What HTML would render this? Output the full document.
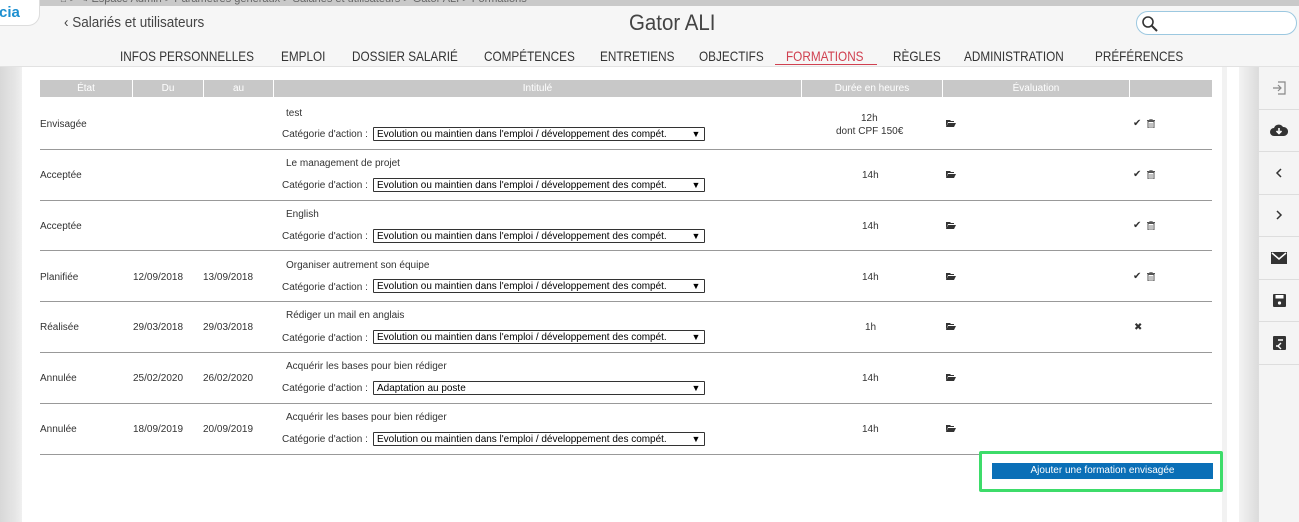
<!DOCTYPE html>
<html><head><meta charset="utf-8"><style>
*{box-sizing:border-box;margin:0;padding:0}
body{width:1299px;height:522px;overflow:hidden;background:#f6f6f6;font-family:"Liberation Sans",sans-serif;position:relative;color:#333}
.crumb{position:absolute;left:0;top:0;width:1299px;height:6px;background:#c9c9c9;font-size:11px;color:#666;overflow:hidden}
.crumb span{position:absolute;left:60px;top:-8px}
.logo{position:absolute;left:-10px;top:-6px;width:50px;height:32px;background:#fff;border-radius:0 0 12px 0;border:1px solid #ddd;font-size:15px;font-weight:bold;color:#1c8fd0;padding:9px 0 0 8px}
.back{position:absolute;left:64px;top:14px;font-size:15px;color:#444;transform:scaleX(.9);transform-origin:left}
.title{position:absolute;left:629px;top:10px;font-size:22px;color:#444;transform:scaleX(.93);transform-origin:left}
.search{position:absolute;left:1136px;top:11px;width:161px;height:24px;border:1px solid #9cc8e0;border-radius:12px;background:#fff}
.nav{position:absolute;top:48px;font-size:14px;color:#333;white-space:nowrap}
.nav span{position:absolute;transform:scaleX(.84);transform-origin:left}
.navline{position:absolute;left:0;top:66px;width:1299px;height:1px;background:#e2e2e2}
.lstrip{position:absolute;left:0;top:67px;width:22px;height:455px;background:linear-gradient(90deg,#d8d8d8,#e6e6e6 70%,#f0f0f0)}
.panel{position:absolute;left:22px;top:67px;width:1200px;height:455px;background:#fff}
.p2{position:absolute;left:1222px;top:67px;width:5px;height:455px;background:#f2f2f2}
.p3{position:absolute;left:1227px;top:67px;width:12px;height:455px;background:#fff}
.p4{position:absolute;left:1239px;top:67px;width:19px;height:455px;background:linear-gradient(90deg,#f3f3f3,#dcdcdc)}
.side{position:absolute;left:1258px;top:67px;width:41px;height:455px;background:#f4f4f4;border-left:1px solid #ddd}
.side div{height:42.5px;border-bottom:1px solid #ddd;display:flex;align-items:center;justify-content:center}
.th{position:absolute;top:80px;height:17px;background:#c8c8c8;color:#fff;font-size:10px;text-align:center;line-height:17px}
.cell{position:absolute;font-size:10px;color:#333}
.sep{position:absolute;left:40px;width:1172px;height:1px;background:#999}
.sel{position:absolute;left:373px;width:332px;height:14px;border:1px solid #333;font-size:10.5px;color:#000;background:#fff;padding-left:3px;line-height:12px;border-radius:1px;white-space:nowrap;overflow:hidden}
.sel span{display:inline-block;transform:scaleX(.95);transform-origin:left}
.sel i{position:absolute;right:0;top:0;width:16px;height:12px;background:#fff;font-style:normal;font-size:9px;text-align:center}
.fold{position:absolute;width:10px;height:7px}
.btnbox{position:absolute;left:979px;top:451px;width:244px;height:41px;border:3px solid #3ddc6a;border-radius:2px;background:#fff}
.btn{position:absolute;left:992px;top:463px;width:221px;height:16px;background:#0a6fb7;color:#fff;font-size:10px;text-align:center;line-height:16px}
</style></head><body>
<div class="crumb"><span>⌂ &gt; ✎ Espace Admin &gt; Paramètres généraux &gt; Salariés et utilisateurs &gt; Gator ALI &gt; Formations</span></div>
<div class="logo">cia</div>
<div class="back">‹ Salariés et utilisateurs</div>
<div class="title">Gator ALI</div>
<div class="search"><svg width="18" height="18" style="position:absolute;left:4px;top:3px" viewBox="0 0 18 18"><circle cx="7" cy="7" r="5" fill="none" stroke="#333" stroke-width="1.6"/><path d="M11 11l5 5" stroke="#333" stroke-width="2"/></svg></div>
<div class="nav">
<span style="left:120px">INFOS PERSONNELLES</span><span style="left:281px">EMPLOI</span><span style="left:352px">DOSSIER SALARIÉ</span><span style="left:484px">COMPÉTENCES</span><span style="left:600px">ENTRETIENS</span><span style="left:699px">OBJECTIFS</span><span style="left:786px;color:#d04050">FORMATIONS</span><span style="left:893px">RÈGLES</span><span style="left:964px">ADMINISTRATION</span><span style="left:1095px">PRÉFÉRENCES</span>
</div>
<div style="position:absolute;left:775px;top:64px;width:102px;height:1px;background:#d04050"></div>
<div class="navline"></div>
<div class="lstrip"></div><div class="panel"></div><div class="p2"></div><div class="p3"></div><div class="p4"></div>
<div class="side">
<div><svg width="14" height="14" viewBox="0 0 14 14" fill="none" stroke="#888" stroke-width="1.2"><path d="M6 1h7v12H6M1 7h8M6 4l3 3-3 3"/></svg></div>
<div><svg width="18" height="13" viewBox="0 0 18 13"><path d="M4 12a4 4 0 010-8 5 5 0 019-1 4 4 0 011 9z" fill="#333"/><path d="M9 4v5M6.5 7l2.5 2.5L11.5 7" stroke="#fff" stroke-width="1.6" fill="none"/></svg></div>
<div><svg width="8" height="10" viewBox="0 0 8 10"><path d="M6 1L2 5l4 4" stroke="#333" stroke-width="1.5" fill="none"/></svg></div>
<div><svg width="8" height="10" viewBox="0 0 8 10"><path d="M2 1l4 4-4 4" stroke="#333" stroke-width="1.5" fill="none"/></svg></div>
<div><svg width="16" height="12" viewBox="0 0 16 12"><rect width="16" height="12" fill="#333"/><path d="M1 1l7 6 7-6" stroke="#fff" stroke-width="1.5" fill="none"/></svg></div>
<div><svg width="13" height="13" viewBox="0 0 13 13"><rect width="13" height="13" rx="1" fill="#333"/><rect x="2.5" y="1" width="8" height="3.5" fill="#fff"/><circle cx="6.5" cy="9" r="1.6" fill="#fff"/></svg></div>
<div><svg width="13" height="14" viewBox="0 0 13 14"><rect width="13" height="14" rx="1" fill="#333"/><path d="M10 4H5M3 10h3M8 7l-3 3 3 3" stroke="#fff" stroke-width="1.4" fill="none"/></svg></div>
</div>
<div class="th" style="left:40px;width:92px">État</div>
<div class="th" style="left:133px;width:70px">Du</div>
<div class="th" style="left:204px;width:69px">au</div>
<div class="th" style="left:274px;width:527px">Intitulé</div>
<div class="th" style="left:802px;width:140px">Durée en heures</div>
<div class="th" style="left:943px;width:186px">Évaluation</div>
<div class="th" style="left:1130px;width:82px"></div>

<svg width="0" height="0" style="position:absolute"><defs><symbol id="f" viewBox="0 0 10 7"><path d="M0 0h4l1 1h3v1H2L0 7z" fill="#333"/><path d="M2 3h8L8 7H0z" fill="#333"/></symbol><symbol id="t" viewBox="0 0 8 9"><path d="M0 1.5h8M3 1.5V0h2v1.5" stroke="#555" fill="none"/><path d="M1 2.5h6v6.5H1z" fill="none" stroke="#555"/><path d="M3 4v4M5 4v4" stroke="#555" stroke-width=".7"/></symbol></defs></svg>

<div class="cell" style="left:40px;top:119px">Envisagée</div>
<div class="cell" style="left:286px;top:108px">test</div>
<div class="cell" style="left:282px;top:129px">Catégorie d'action :</div>
<div class="sel" style="top:127px"><span>Evolution ou maintien dans l'emploi / développement des compét.</span><i>▼</i></div>
<div class="cell" style="left:861px;top:113px">12h</div>
<div class="cell" style="left:836px;top:126px">dont CPF 150€</div>
<svg class="fold" style="left:946px;top:120px"><use href="#f"/></svg>
<div class="cell" style="left:1133px;top:118px">✔</div><svg style="position:absolute;left:1147px;top:119px" width="8" height="9"><use href="#t"/></svg>
<div class="sep" style="top:149px"></div>

<div class="cell" style="left:40px;top:170px">Acceptée</div>
<div class="cell" style="left:286px;top:158px">Le management de projet</div>
<div class="cell" style="left:282px;top:180px">Catégorie d'action :</div>
<div class="sel" style="top:178px"><span>Evolution ou maintien dans l'emploi / développement des compét.</span><i>▼</i></div>
<div class="cell" style="left:862px;top:170px">14h</div>
<svg class="fold" style="left:946px;top:171px"><use href="#f"/></svg>
<div class="cell" style="left:1133px;top:169px">✔</div><svg style="position:absolute;left:1147px;top:170px" width="8" height="9"><use href="#t"/></svg>
<div class="sep" style="top:200px"></div>

<div class="cell" style="left:40px;top:221px">Acceptée</div>
<div class="cell" style="left:286px;top:209px">English</div>
<div class="cell" style="left:282px;top:231px">Catégorie d'action :</div>
<div class="sel" style="top:229px"><span>Evolution ou maintien dans l'emploi / développement des compét.</span><i>▼</i></div>
<div class="cell" style="left:862px;top:221px">14h</div>
<svg class="fold" style="left:946px;top:222px"><use href="#f"/></svg>
<div class="cell" style="left:1133px;top:220px">✔</div><svg style="position:absolute;left:1147px;top:221px" width="8" height="9"><use href="#t"/></svg>
<div class="sep" style="top:250px"></div>

<div class="cell" style="left:40px;top:272px">Planifiée</div>
<div class="cell" style="left:133px;top:272px">12/09/2018</div>
<div class="cell" style="left:203px;top:272px">13/09/2018</div>
<div class="cell" style="left:286px;top:260px">Organiser autrement son équipe</div>
<div class="cell" style="left:282px;top:282px">Catégorie d'action :</div>
<div class="sel" style="top:279px"><span>Evolution ou maintien dans l'emploi / développement des compét.</span><i>▼</i></div>
<div class="cell" style="left:862px;top:272px">14h</div>
<svg class="fold" style="left:946px;top:273px"><use href="#f"/></svg>
<div class="cell" style="left:1133px;top:271px">✔</div><svg style="position:absolute;left:1147px;top:272px" width="8" height="9"><use href="#t"/></svg>
<div class="sep" style="top:301px"></div>

<div class="cell" style="left:40px;top:322px">Réalisée</div>
<div class="cell" style="left:133px;top:322px">29/03/2018</div>
<div class="cell" style="left:203px;top:322px">29/03/2018</div>
<div class="cell" style="left:286px;top:310px">Rédiger un mail en anglais</div>
<div class="cell" style="left:282px;top:333px">Catégorie d'action :</div>
<div class="sel" style="top:330px"><span>Evolution ou maintien dans l'emploi / développement des compét.</span><i>▼</i></div>
<div class="cell" style="left:865px;top:322px">1h</div>
<svg class="fold" style="left:946px;top:323px"><use href="#f"/></svg>
<div class="cell" style="left:1134px;top:322px">✖</div>
<div class="sep" style="top:352px"></div>

<div class="cell" style="left:40px;top:373px">Annulée</div>
<div class="cell" style="left:133px;top:373px">25/02/2020</div>
<div class="cell" style="left:203px;top:373px">26/02/2020</div>
<div class="cell" style="left:286px;top:361px">Acquérir les bases pour bien rédiger</div>
<div class="cell" style="left:282px;top:383px">Catégorie d'action :</div>
<div class="sel" style="top:381px"><span>Adaptation au poste</span><i>▼</i></div>
<div class="cell" style="left:862px;top:373px">14h</div>
<svg class="fold" style="left:946px;top:374px"><use href="#f"/></svg>
<div class="sep" style="top:403px"></div>

<div class="cell" style="left:40px;top:424px">Annulée</div>
<div class="cell" style="left:133px;top:424px">18/09/2019</div>
<div class="cell" style="left:203px;top:424px">20/09/2019</div>
<div class="cell" style="left:286px;top:412px">Acquérir les bases pour bien rédiger</div>
<div class="cell" style="left:282px;top:434px">Catégorie d'action :</div>
<div class="sel" style="top:432px"><span>Evolution ou maintien dans l'emploi / développement des compét.</span><i>▼</i></div>
<div class="cell" style="left:862px;top:424px">14h</div>
<svg class="fold" style="left:946px;top:425px"><use href="#f"/></svg>
<div class="sep" style="top:454px"></div>

<div class="btnbox"></div>
<div class="btn">Ajouter une formation envisagée</div>
</body></html>
